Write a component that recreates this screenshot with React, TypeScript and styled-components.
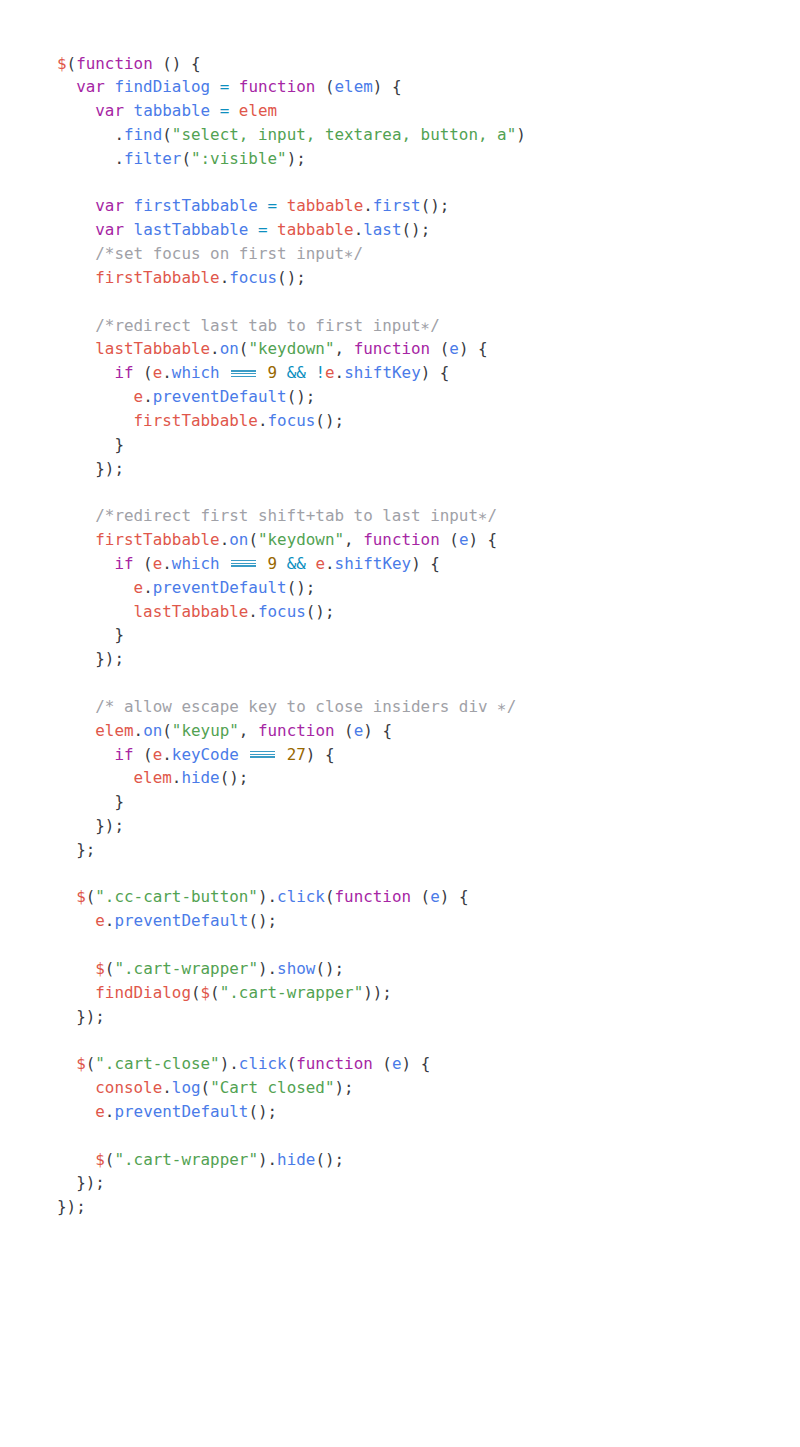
import React from "react";
import styled, { createGlobalStyle, css } from "styled-components";

const GlobalStyle = createGlobalStyle`
  html, body {
    margin: 0;
    padding: 0;
    background: #ffffff;
  }
`;

type Kind = "p" | "k" | "f" | "o" | "v" | "s" | "n" | "c" | "eq";
type Tok = [Kind, string];

const colors: Record<Kind, string> = {
  p: "#383a42",
  k: "#a626a4",
  f: "#4a7be8",
  o: "#0e8fbf",
  v: "#e0574b",
  s: "#52a252",
  n: "#986801",
  c: "#a0a1a7",
  eq: "#0e8fbf",
};

const Page = styled.main`
  padding: 51.5px 0 0 57px;
  min-height: 1447px;
  box-sizing: border-box;
`;

const Code = styled.pre`
  margin: 0;
  font-family: "DejaVu Sans Mono", "Liberation Mono", monospace;
  font-size: 15.9px;
  line-height: 23.83px;
  color: #383a42;
`;

const Line = styled.div`
  white-space: pre;
  height: 23.83px;
`;

const Token = styled.span<{ $kind: Kind }>`
  color: ${(p) => colors[p.$kind]};
  ${(p) =>
    p.$kind === "eq" &&
    css`
      position: relative;
      color: transparent;
      &::before {
        content: "";
        position: absolute;
        left: 2px;
        right: 2px;
        top: 50%;
        margin-top: -3px;
        height: 7px;
        background: linear-gradient(
          to bottom,
          #3a9cc6 0,
          #3a9cc6 1.5px,
          transparent 1.5px,
          transparent 2.75px,
          #3a9cc6 2.75px,
          #3a9cc6 4.25px,
          transparent 4.25px,
          transparent 5.5px,
          #3a9cc6 5.5px,
          #3a9cc6 7px
        );
      }
    `}
`;

const ind = (n: number): Tok => ["p", " ".repeat(n)];

const lines: Tok[][] = [
  [["v", "$"], ["p", "("], ["k", "function"], ["p", " () {"]],
  [ind(2), ["k", "var"], ["p", " "], ["f", "findDialog"], ["p", " "], ["o", "="], ["p", " "], ["k", "function"], ["p", " ("], ["f", "elem"], ["p", ") {"]],
  [ind(4), ["k", "var"], ["p", " "], ["f", "tabbable"], ["p", " "], ["o", "="], ["p", " "], ["v", "elem"]],
  [ind(6), ["p", "."], ["f", "find"], ["p", "("], ["s", "\"select, input, textarea, button, a\""], ["p", ")"]],
  [ind(6), ["p", "."], ["f", "filter"], ["p", "("], ["s", "\":visible\""], ["p", ");"]],
  [],
  [ind(4), ["k", "var"], ["p", " "], ["f", "firstTabbable"], ["p", " "], ["o", "="], ["p", " "], ["v", "tabbable"], ["p", "."], ["f", "first"], ["p", "();"]],
  [ind(4), ["k", "var"], ["p", " "], ["f", "lastTabbable"], ["p", " "], ["o", "="], ["p", " "], ["v", "tabbable"], ["p", "."], ["f", "last"], ["p", "();"]],
  [ind(4), ["c", "/*set focus on first input\u2217/"]],
  [ind(4), ["v", "firstTabbable"], ["p", "."], ["f", "focus"], ["p", "();"]],
  [],
  [ind(4), ["c", "/*redirect last tab to first input\u2217/"]],
  [ind(4), ["v", "lastTabbable"], ["p", "."], ["f", "on"], ["p", "("], ["s", "\"keydown\""], ["p", ", "], ["k", "function"], ["p", " ("], ["f", "e"], ["p", ") {"]],
  [ind(6), ["k", "if"], ["p", " ("], ["v", "e"], ["p", "."], ["f", "which"], ["p", " "], ["eq", "==="], ["p", " "], ["n", "9"], ["p", " "], ["o", "&&"], ["p", " "], ["o", "!"], ["v", "e"], ["p", "."], ["f", "shiftKey"], ["p", ") {"]],
  [ind(8), ["v", "e"], ["p", "."], ["f", "preventDefault"], ["p", "();"]],
  [ind(8), ["v", "firstTabbable"], ["p", "."], ["f", "focus"], ["p", "();"]],
  [ind(6), ["p", "}"]],
  [ind(4), ["p", "});"]],
  [],
  [ind(4), ["c", "/*redirect first shift+tab to last input\u2217/"]],
  [ind(4), ["v", "firstTabbable"], ["p", "."], ["f", "on"], ["p", "("], ["s", "\"keydown\""], ["p", ", "], ["k", "function"], ["p", " ("], ["f", "e"], ["p", ") {"]],
  [ind(6), ["k", "if"], ["p", " ("], ["v", "e"], ["p", "."], ["f", "which"], ["p", " "], ["eq", "==="], ["p", " "], ["n", "9"], ["p", " "], ["o", "&&"], ["p", " "], ["v", "e"], ["p", "."], ["f", "shiftKey"], ["p", ") {"]],
  [ind(8), ["v", "e"], ["p", "."], ["f", "preventDefault"], ["p", "();"]],
  [ind(8), ["v", "lastTabbable"], ["p", "."], ["f", "focus"], ["p", "();"]],
  [ind(6), ["p", "}"]],
  [ind(4), ["p", "});"]],
  [],
  [ind(4), ["c", "/* allow escape key to close insiders div \u2217/"]],
  [ind(4), ["v", "elem"], ["p", "."], ["f", "on"], ["p", "("], ["s", "\"keyup\""], ["p", ", "], ["k", "function"], ["p", " ("], ["f", "e"], ["p", ") {"]],
  [ind(6), ["k", "if"], ["p", " ("], ["v", "e"], ["p", "."], ["f", "keyCode"], ["p", " "], ["eq", "==="], ["p", " "], ["n", "27"], ["p", ") {"]],
  [ind(8), ["v", "elem"], ["p", "."], ["f", "hide"], ["p", "();"]],
  [ind(6), ["p", "}"]],
  [ind(4), ["p", "});"]],
  [ind(2), ["p", "};"]],
  [],
  [ind(2), ["v", "$"], ["p", "("], ["s", "\".cc-cart-button\""], ["p", ")."], ["f", "click"], ["p", "("], ["k", "function"], ["p", " ("], ["f", "e"], ["p", ") {"]],
  [ind(4), ["v", "e"], ["p", "."], ["f", "preventDefault"], ["p", "();"]],
  [],
  [ind(4), ["v", "$"], ["p", "("], ["s", "\".cart-wrapper\""], ["p", ")."], ["f", "show"], ["p", "();"]],
  [ind(4), ["v", "findDialog"], ["p", "("], ["v", "$"], ["p", "("], ["s", "\".cart-wrapper\""], ["p", "));"]],
  [ind(2), ["p", "});"]],
  [],
  [ind(2), ["v", "$"], ["p", "("], ["s", "\".cart-close\""], ["p", ")."], ["f", "click"], ["p", "("], ["k", "function"], ["p", " ("], ["f", "e"], ["p", ") {"]],
  [ind(4), ["v", "console"], ["p", "."], ["f", "log"], ["p", "("], ["s", "\"Cart closed\""], ["p", ");"]],
  [ind(4), ["v", "e"], ["p", "."], ["f", "preventDefault"], ["p", "();"]],
  [],
  [ind(4), ["v", "$"], ["p", "("], ["s", "\".cart-wrapper\""], ["p", ")."], ["f", "hide"], ["p", "();"]],
  [ind(2), ["p", "});"]],
  [["p", "});"]],
];

export default function App() {
  return (
    <>
      <GlobalStyle />
      <Page>
        <Code>
          {lines.map((toks, i) => (
            <Line key={i}>
              {toks.map(([k, t], j) => (
                <Token key={j} $kind={k}>
                  {t}
                </Token>
              ))}
            </Line>
          ))}
        </Code>
      </Page>
    </>
  );
}
